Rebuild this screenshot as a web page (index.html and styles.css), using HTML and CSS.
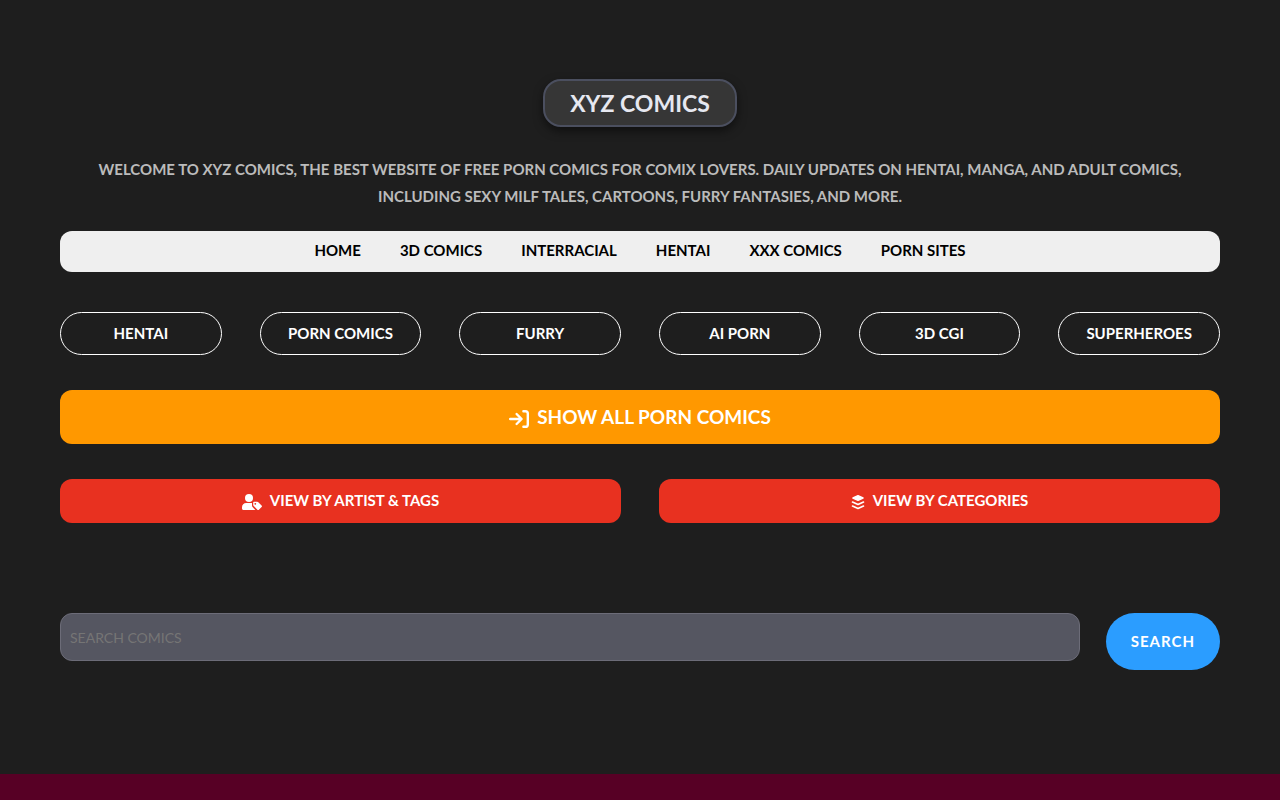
FILE: index.html
```html
<!DOCTYPE html>
<html lang="en">

    <head>
        <meta charset="UTF-8">
        <meta name="viewport" content="width=device-width, initial-scale=1.0">
        <title>XYZ Comics</title>
        <link rel="stylesheet" href="styles.css">
    </head>

    <body>
        <header class="container">
            <h1 class="title">XYZ Comics</h1>
            <p class="intro">Welcome to XYZ Comics, the best website of free porn comics for comix lovers. Daily updates on hentai, manga, and adult comics, including sexy milf tales, cartoons, furry fantasies, and more.</p>

            <nav class="menu">
                <a href="#">Home</a>
                <a href="#">3D Comics</a>
                <a href="#">Interracial</a>
                <a href="#">Hentai</a>
                <a href="#">XXX Comics</a>
                <a href="#">Porn Sites</a>
            </nav>

            <div class="tags">
                <a class="tag" href="#">Hentai</a>
                <a class="tag" href="#">Porn Comics</a>
                <a class="tag" href="#">Furry</a>
                <a class="tag" href="#">AI Porn</a>
                <a class="tag" href="#">3D CGI</a>
                <a class="tag" href="#">Superheroes</a>
            </div>

            <a class="show-all" href="#">
                <svg class="icon" width="20" height="20" viewBox="0 0 20 20" fill="none" stroke="currentColor" stroke-width="2.4" stroke-linecap="round" stroke-linejoin="round" aria-hidden="true">
                    <path d="M1.2 10h10.6M7.6 5l5 5-5 5M14.4 2.2h2a2.4 2.4 0 0 1 2.4 2.4v10.8a2.4 2.4 0 0 1-2.4 2.4h-2"/>
                </svg>
                Show all porn comics
            </a>

            <div class="views">
                <a class="view" href="#">
                    <svg class="icon" width="20" height="16" viewBox="0 0 20 16" fill="currentColor" aria-hidden="true">
                        <circle cx="7" cy="4" r="4"/>
                        <path d="M4.2 9C1.800 9 0 10.800 0 13.200v1.300C0 15.300.7 16 1.500 16h11.900L10.800 13.300c-.5-.5-.8-1.100-.8-1.800V9z"/>
                        <path fill-rule="evenodd" d="M12 7.800h3.200c.4 0 .8.2 1.100.5l3.300 3.300c.5.5.5 1 0 1.500l-2.700 2.600c-.5.5-1 .5-1.500 0l-3.700-3.700c-.3-.3-.5-.7-.5-1.100V8.600c0-.5.3-.8.8-.8zM13.300 10.700a.9.9 0 1 0 0-1.800.9.9 0 0 0 0 1.800z"/>
                    </svg>
                    View by artist &amp; tags
                </a>
                <a class="view" href="#">
                    <svg class="icon" width="14" height="16" viewBox="0 0 14 16" fill="none" stroke="currentColor" stroke-width="1.6" stroke-linecap="round" stroke-linejoin="round" aria-hidden="true">
                        <path d="M7 1.800 12 4 7 6.200 2 4z" fill="currentColor"/>
                        <path d="M1.500 8 7 10.500 12.500 8M1.500 12 7 14.500 12.500 12"/>
                    </svg>
                    View by categories
                </a>
            </div>

            <form class="search">
                <input class="search-input" type="search" name="q" placeholder="SEARCH COMICS" aria-label="Search comics">
                <button class="search-button" type="submit">Search</button>
            </form>
        </header>
    </body>

</html>
```

FILE: styles.css
```css
* {
    box-sizing: border-box;
}

body {
    margin: 0;
    background-color: #570025;
    color: #fff;
    font-family: Lato, "Open Sans", sans-serif;
    font-size: 15px;
    font-weight: 700;
    text-transform: uppercase;
}

a {
    color: inherit;
    text-decoration: none;
}

.container {
    display: flex;
    flex-direction: column;
    padding: 79px 60px 104px;
    background-color: #1e1e1e;
    text-align: center;
}

.title {
    align-self: center;
    margin: 0 0 29px;
    padding: 4px 25px;
    border: 2px solid #4b4f5f;
    border-radius: 18px;
    background-color: #363636;
    box-shadow: 0 4px 10px rgba(0, 0, 0, 0.5);
    color: #e6e8f0;
    font-size: 23px;
    line-height: 36px;
}

.intro {
    margin: 0 0 21px;
    padding: 0 24px;
    color: #bbb;
    line-height: 27px;
}

.menu {
    display: flex;
    justify-content: center;
    gap: 39px;
    margin-bottom: 40px;
    padding: 7px 8px 9px;
    border-radius: 12px;
    background-color: #efefef;
    color: #000;
    line-height: 25px;
}

.tags {
    display: grid;
    grid-template-columns: repeat(6, 1fr);
    column-gap: 38px;
    margin-bottom: 35px;
}

.tag {
    padding: 8px;
    border: 1px solid #fff;
    border-radius: 22px;
    line-height: 25px;
}

.show-all,
.view {
    display: flex;
    align-items: center;
    justify-content: center;
    gap: 8px;
    border-radius: 12px;
}

.show-all {
    margin-bottom: 35px;
    padding: 12px;
    background-color: #ff9800;
    font-size: 19px;
    line-height: 30px;
}

.icon {
    margin-top: 4px;
}

.views {
    display: grid;
    grid-template-columns: 1fr 1fr;
    column-gap: 38px;
    margin-bottom: 90px;
}

.view {
    padding: 8px 9px 10px;
    background-color: #e83120;
    line-height: 26px;
}

.search {
    display: flex;
    align-items: flex-start;
    gap: 26px;
}

.search-input {
    flex: 1;
    height: 48px;
    padding: 0 9px;
    border: 1px solid #6c6c78;
    border-radius: 12px;
    background-color: #555661;
    color: #fff;
    font: inherit;
    font-size: 14px;
    font-weight: 400;
}

.search-input::placeholder {
    color: #757575;
}

.search-button {
    padding: 16px 25px;
    border: none;
    border-radius: 29px;
    background-color: #2b9dff;
    color: #fff;
    cursor: pointer;
    font: inherit;
    letter-spacing: 1px;
    line-height: 25px;
    text-transform: uppercase;
}
```
